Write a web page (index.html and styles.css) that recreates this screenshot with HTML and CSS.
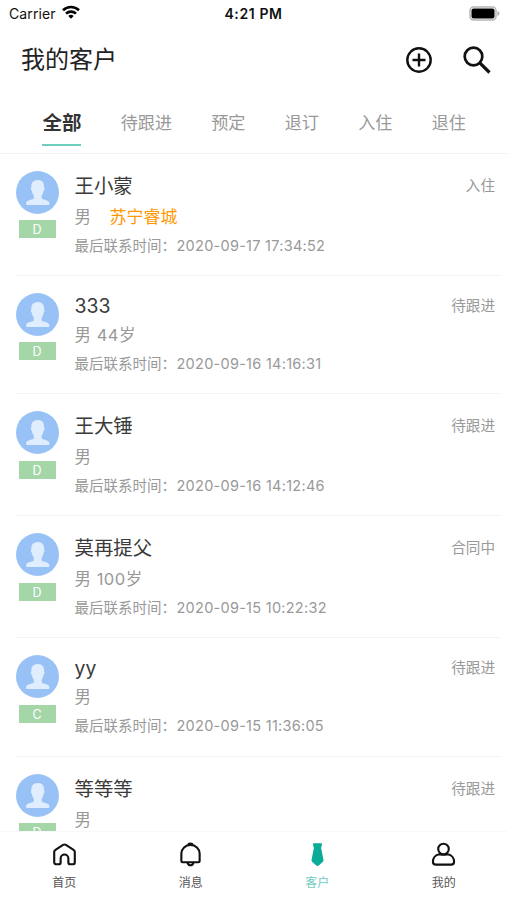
FILE: index.html
```html
<!DOCTYPE html>
<html lang="zh-CN">
  <head>
    <meta charset="utf-8"/>
    <title>我的客户</title>
    <link rel="stylesheet" href="styles.css">
  </head>
  <body>
    <svg class="defs">
      <symbol id="avatar" viewBox="0 0 43 43">
        <circle cx="21.5" cy="21.5" r="21.5" fill="#98c2f6"/>
        <path fill="#dfedfe" d="M21.500 9c4.500-.3 6.900 2.500 6.600 7.500.8.400.5 2.800-.6 3.500-.3 2.200-1 3.700-1.800 4.600v3c1.500 1.500 7.700 1.300 7.700 4.900 0 1-.4 1.500-1.200 1.500H11.300c-.8 0-1.200-.5-1.200-1.500 0-3.600 6.200-3.400 7.700-4.900v-3c-.9-1-1.600-2.500-1.800-4.600-1.200-.7-1.500-3.100-.6-3.500C14.900 12 17 9.300 21.500 9z"/>
      </symbol>
    </svg>

    <div class="statusbar">
      <div class="carrier">
        <span>Carrier</span>
        <svg width="18" height="14" viewBox="0 0 18 14" fill="none" stroke="#000" stroke-width="2.600">
          <path d="M1 5.200a11.500 11.500 0 0 1 16 0"/>
          <path d="M4 8.600a7.200 7.200 0 0 1 10 0"/>
          <path d="M9 13.800L6.300 11.100a3.900 3.900 0 0 1 5.400 0z" fill="#000" stroke="none"/>
        </svg>
      </div>
      <div class="clock">4:21 PM</div>
      <svg class="battery" width="31" height="15" viewBox="0 0 31 15">
        <rect x="1" y="1" width="26" height="13" rx="3.500" fill="#fff" stroke="#b5b5b5" stroke-width="1.500"/>
        <rect x="2.500" y="2.500" width="23" height="10" rx="2" fill="#000"/>
        <path d="M28.500 5v5q2-.8 2-2.500t-2-2.500z" fill="#aaa"/>
      </svg>
    </div>

    <div class="header">
      <h1>我的客户</h1>
      <svg width="26" height="26" viewBox="0 0 26 26" fill="none" stroke="#111" stroke-width="2.400">
        <circle cx="13" cy="13" r="11.700"/>
        <path d="M13 6.500v13M6.500 13h13"/>
      </svg>
      <svg width="28" height="28" viewBox="0 0 28 28" fill="none" stroke="#111">
        <circle cx="10.500" cy="10.500" r="8.800" stroke-width="2.700"/>
        <path d="M16.800 16.800l9.700 9.700" stroke-width="3.200"/>
      </svg>
    </div>

    <div class="tabs">
      <div class="tab active">全部</div>
      <div class="tab">待跟进</div>
      <div class="tab">预定</div>
      <div class="tab">退订</div>
      <div class="tab">入住</div>
      <div class="tab">退住</div>
    </div>

    <div class="list">
      <div class="customer">
        <div class="side">
          <svg class="avatar"><use href="#avatar"/></svg>
          <span class="level">D</span>
        </div>
        <div class="info">
          <div class="name">王小蒙</div>
          <div class="sub">男<span class="project">苏宁睿城</span></div>
          <div class="time"><span class="label">最后联系时间：</span>2020-09-17 17:34:52</div>
        </div>
        <div class="state">入住</div>
      </div>
      <div class="customer latin">
        <div class="side">
          <svg class="avatar"><use href="#avatar"/></svg>
          <span class="level">D</span>
        </div>
        <div class="info">
          <div class="name">333</div>
          <div class="sub">男 44岁</div>
          <div class="time"><span class="label">最后联系时间：</span>2020-09-16 14:16:31</div>
        </div>
        <div class="state">待跟进</div>
      </div>
      <div class="customer">
        <div class="side">
          <svg class="avatar"><use href="#avatar"/></svg>
          <span class="level">D</span>
        </div>
        <div class="info">
          <div class="name">王大锤</div>
          <div class="sub">男</div>
          <div class="time"><span class="label">最后联系时间：</span>2020-09-16 14:12:46</div>
        </div>
        <div class="state">待跟进</div>
      </div>
      <div class="customer">
        <div class="side">
          <svg class="avatar"><use href="#avatar"/></svg>
          <span class="level">D</span>
        </div>
        <div class="info">
          <div class="name">莫再提父</div>
          <div class="sub">男 100岁</div>
          <div class="time"><span class="label">最后联系时间：</span>2020-09-15 10:22:32</div>
        </div>
        <div class="state">合同中</div>
      </div>
      <div class="customer latin">
        <div class="side">
          <svg class="avatar"><use href="#avatar"/></svg>
          <span class="level">C</span>
        </div>
        <div class="info">
          <div class="name">yy</div>
          <div class="sub">男</div>
          <div class="time"><span class="label">最后联系时间：</span>2020-09-15 11:36:05</div>
        </div>
        <div class="state">待跟进</div>
      </div>
      <div class="customer">
        <div class="side">
          <svg class="avatar"><use href="#avatar"/></svg>
          <span class="level">D</span>
        </div>
        <div class="info">
          <div class="name">等等等</div>
          <div class="sub">男</div>
        </div>
        <div class="state">待跟进</div>
      </div>
    </div>

    <div class="navbar">
      <div class="nav">
        <svg width="25" height="25" viewBox="0 0 26 26">
          <path d="M4.500 23.200q-2.200 0-2.200-2.200V10.500q0-1.500 1.300-2.300l7.900-5.200q1.500-.9 3 0l7.900 5.200q1.300.8 1.300 2.300V21q0 2.200-2.200 2.200h-2.300q-2.200 0-2.200-2.200v-4a4 4 0 0 0-8 0v4q0 2.200-2.200 2.200z"/>
        </svg>
        <span>首页</span>
      </div>
      <div class="nav">
        <svg width="25" height="25" viewBox="0 0 26 26">
          <path d="M5 21q-1.500 0-1.500-1.500V12a9.500 9 0 0 1 19 0v7.500q0 1.500-1.500 1.500z"/>
          <path d="M11 2.800q0-1.300 2-1.300t2 1.300M10 21.500q.6 2.700 3 2.700t3-2.700"/>
        </svg>
        <span>消息</span>
      </div>
      <div class="nav active">
        <svg width="25" height="25" viewBox="0 0 26 26">
          <path d="M9.300 1.200h7.400q1.300 0 1 1.300l-.9 3.500q-.1.700.2 1.400l2.200 11.200q.2 1.200-.6 2l-4.300 3.800q-1.300 1-2.600 0l-4.300-3.800q-.8-.8-.6-2L9 7.400q.3-.7.2-1.400l-.9-3.500q-.3-1.300 1-1.300z"/>
        </svg>
        <span>客户</span>
      </div>
      <div class="nav">
        <svg width="25" height="25" viewBox="0 0 26 26">
          <circle cx="13" cy="7.300" r="5.500"/>
          <path d="M8.600 12.800C4.500 13.500 2 17 2 20.500q0 3 3 3h16q3 0 3-3c0-3.500-2.500-7-6.600-7.700q-4.400 1-8.800 0z"/>
        </svg>
        <span>我的</span>
      </div>
    </div>
  </body>
</html>
```
FILE: styles.css
```css
* {
  margin: 0;
  padding: 0;
  box-sizing: border-box;
}

body {
  display: flex;
  flex-direction: column;
  height: 900px;
  overflow: hidden;
  background: #fff;
  color: #3a3a3a;
  font-family: Inter, 'Noto Sans CJK SC', sans-serif;
}

svg {
  display: block;
  flex: none;
}

.defs {
  display: none;
}

.statusbar {
  display: grid;
  grid-template-columns: 1fr auto 1fr;
  align-items: center;
  height: 27px;
  padding: 0 7px;
  color: #111;
  font-size: 14px;
}

.carrier {
  display: flex;
  gap: 6px;
  padding-left: 2px;
  letter-spacing: 0.1px;
}

.clock {
  font-weight: 600;
  letter-spacing: 0.6px;
}

.battery {
  justify-self: end;
}

.header {
  display: flex;
  align-items: center;
  height: 65px;
  padding: 0 16px 0 21px;
}

.header h1 {
  flex: 1;
  font-size: 24px;
  line-height: 36px;
  font-weight: 400;
  color: #222;
}

.header svg + svg {
  margin-left: 31px;
}

.tabs {
  display: flex;
  gap: 39.3px;
  height: 61.5px;
  padding-left: 42.4px;
  border-bottom: 1px solid #f1f1f1;
}

.tab {
  height: 54px;
  font-size: 17.1px;
  line-height: 62px;
  color: #999;
}

.tab.active {
  font-size: 19.5px;
  font-weight: 700;
  color: #333;
  border-bottom: 2px solid #6ecdbd;
}

.list {
  flex: 1;
  min-height: 0;
  overflow: hidden;
  padding: 0 7px 0 15px;
}

.customer {
  display: flex;
  height: 122px;
  padding: 17px 5px 0 0;
  border-bottom: 1px solid #f3f3f3;
}

.customer.latin {
  height: 118.5px;
}

.side {
  display: flex;
  flex-direction: column;
  align-items: center;
  width: 44px;
}

.avatar {
  width: 43px;
  height: 43px;
}

.level {
  width: 37px;
  height: 18px;
  margin-top: 6.5px;
  background: #a5d6a7;
  color: #fff;
  font-size: 12.5px;
  line-height: 19px;
  text-align: center;
}

.info {
  flex: 1;
  margin-left: 15.5px;
}

.name {
  font-size: 19.4px;
  line-height: 30px;
}

.latin .name {
  line-height: 26px;
}

.sub {
  margin-top: 4px;
  font-size: 16.5px;
  line-height: 24px;
  letter-spacing: 0.5px;
  color: #999;
}

.project {
  margin-left: 18px;
  font-size: 17px;
  letter-spacing: 0;
  color: #ff9800;
}

.time {
  display: flex;
  margin-top: 7px;
  font-size: 14.5px;
  line-height: 20px;
  letter-spacing: 0.27px;
  color: #999;
}

.label {
  width: 102px;
  letter-spacing: 0;
}

.state {
  font-size: 14.6px;
  line-height: 30px;
  color: #999;
}

.latin .state {
  line-height: 26px;
}

.navbar {
  display: grid;
  grid-template-columns: repeat(4, 1fr);
  height: 69px;
  padding-left: 1px;
  border-top: 1px solid #f8f8f8;
}

.nav {
  display: flex;
  flex-direction: column;
  align-items: center;
  padding-top: 10px;
  font-size: 12px;
  line-height: 18px;
  color: #555;
}

.nav svg {
  fill: none;
  stroke: #111;
  stroke-width: 2.2;
  margin-bottom: 7px;
}

.nav.active {
  color: #6ecdbd;
}

.nav.active svg {
  fill: #0aab97;
  stroke: none;
}
```
